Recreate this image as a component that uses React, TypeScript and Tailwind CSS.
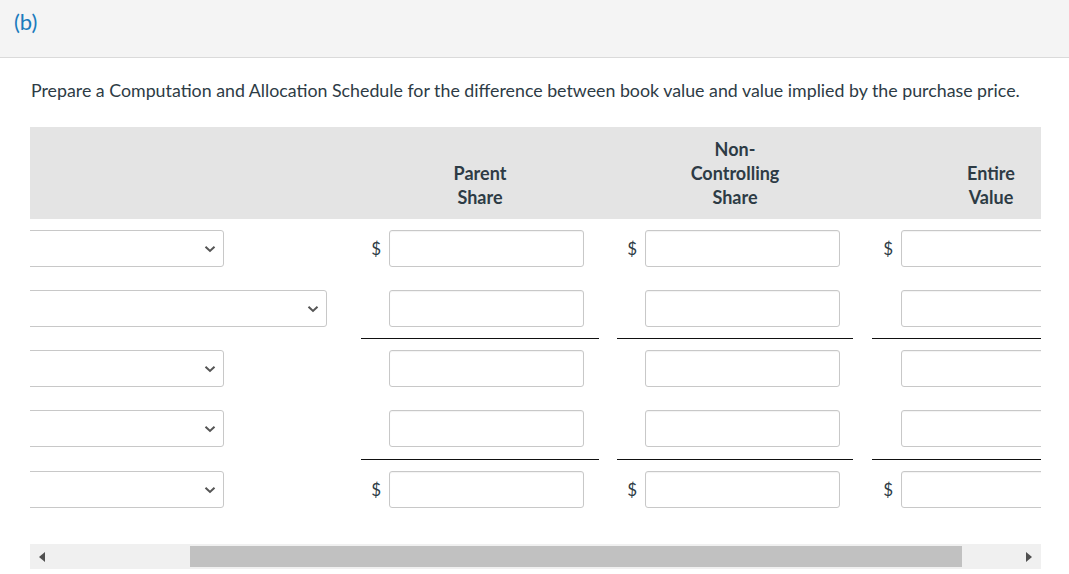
import React from "react";

const rows = [
  { sel: 204, dollar: true, line: 0 },
  { sel: 307, dollar: false, line: 11 },
  { sel: 204, dollar: false, line: 0 },
  { sel: 204, dollar: false, line: 12 },
  { sel: 204, dollar: true, line: 0 },
];

function Chevron() {
  return (
    <svg width="12" height="8" viewBox="0 0 12 8" className="block">
      <path d="M1.5 1.8 L6 6 L10.5 1.8" fill="none" stroke="#555" strokeWidth="2" />
    </svg>
  );
}

function AmountCell({ width, dollar, line, inputOffset }: { width: number; dollar: boolean; line: number; inputOffset: number }) {
  return (
    <div
      className={
        "flex items-center shrink-0 pt-[11px] " +
        (line === 11
          ? "pb-[11px] border-b border-[#111]"
          : line === 12
          ? "pb-[12px] border-b border-[#111]"
          : "pb-[12px]")
      }
      style={{ width }}
    >
      <div className="text-right pr-[8px] text-[17px] leading-[37px] text-[#2d3b45] shrink-0" style={{ width: inputOffset }}>
        {dollar ? "$" : ""}
      </div>
      <div className="h-[37px] w-[195px] shrink-0 border border-[#c8c8c8] rounded-[3px] bg-white shadow-[inset_0_1px_1px_rgba(0,0,0,0.05)]" />
    </div>
  );
}

export default function App() {
  return (
    <div className="w-[1069px] h-[574px] bg-white font-['Lato','Liberation_Sans',sans-serif] text-[#2d3b45] overflow-hidden">
      <div className="h-[58px] bg-[#f4f4f4] border-b border-[#dadada] pl-[14px] pt-[9px] text-[#1b7bbd] text-[22px] leading-[26px]">
        (b)
      </div>
      <p className="mt-[20px] ml-[31px] text-[17.8px] leading-[24px] whitespace-nowrap">
        Prepare a Computation and Allocation Schedule for the difference between book value and value implied by the purchase price.
      </p>
      <div className="ml-[30px] mt-[25px] w-[1011px] overflow-hidden">
        <div className="w-[1100px]">
          <div className="flex items-end h-[92px] bg-[#e4e4e4] pb-[10px] text-[18px] leading-[24px] font-bold text-[#2d3b45]">
            <div className="w-[331px] shrink-0" />
            <div className="w-[238px] shrink-0 text-center">Parent<br />Share</div>
            <div className="w-[18px] shrink-0" />
            <div className="w-[236px] shrink-0 text-center">Non-<br />Controlling<br />Share</div>
            <div className="w-[19px] shrink-0" />
            <div className="w-[238px] shrink-0 text-center">Entire<br />Value</div>
          </div>
          {rows.map((r, i) => (
            <div key={i} className="flex">
              <div className="w-[331px] shrink-0 pt-[11px]">
                <div
                  className="-ml-[10px] h-[37px] border border-[#c8c8c8] rounded-[3px] bg-white flex items-center justify-end pr-[7px]"
                  style={{ width: r.sel }}
                >
                  <Chevron />
                </div>
              </div>
              <AmountCell width={238} dollar={r.dollar} line={r.line} inputOffset={28} />
              <div className="w-[18px] shrink-0" />
              <AmountCell width={236} dollar={r.dollar} line={r.line} inputOffset={28} />
              <div className="w-[19px] shrink-0" />
              <AmountCell width={238} dollar={r.dollar} line={r.line} inputOffset={29} />
            </div>
          ))}
        </div>
        <div className="mt-[24px] h-[25px] bg-[#f0f0f0] flex items-center">
          <div className="w-[160px] shrink-0 pl-[9px] flex items-center">
            <div className="w-0 h-0 border-y-[5.5px] border-y-transparent border-r-[6px] border-r-[#505050]" />
          </div>
          <div className="w-[772px] h-[21px] shrink-0 bg-[#c1c1c1]" />
          <div className="flex-1 flex justify-end pr-[9px]">
            <div className="w-0 h-0 border-y-[5.5px] border-y-transparent border-l-[6px] border-l-[#505050]" />
          </div>
        </div>
      </div>
    </div>
  );
}
